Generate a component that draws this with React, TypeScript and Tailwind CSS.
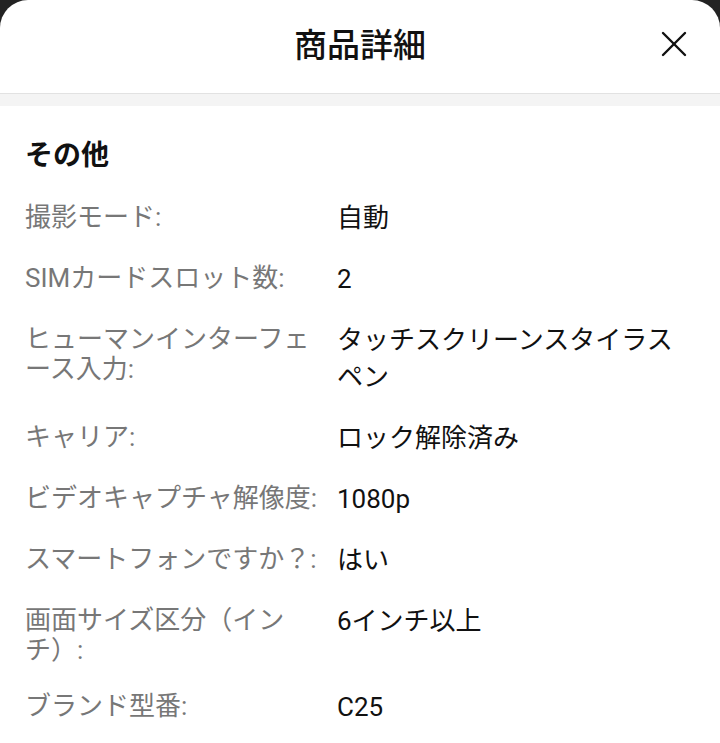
const specs = [
  { label: '撮影モード:', value: '自動' },
  { label: 'SIMカードスロット数:', value: '2' },
  { label: 'ヒューマンインターフェース入力:', value: 'タッチスクリーンスタイラスペン' },
  { label: 'キャリア:', value: 'ロック解除済み' },
  { label: 'ビデオキャプチャ解像度:', value: '1080p' },
  { label: 'スマートフォンですか？:', value: 'はい' },
  { label: '画面サイズ区分（インチ）:', value: '6インチ以上' },
  { label: 'ブランド型番:', value: 'C25' },
]

export default function App() {
  return (
    <div
      className="h-[743px] w-[720px] overflow-hidden bg-[#232323]"
      style={{ fontFamily: 'Roboto, "Noto Sans CJK JP", sans-serif' }}
    >
      <div className="h-full rounded-t-[28px] bg-white">
        <header className="relative flex h-[94px] items-center justify-center border-b border-[#e2e2e2] pb-[3px]">
          <h1 className="text-[33px] leading-none font-medium text-[#111]">商品詳細</h1>
          <button aria-label="閉じる" className="absolute right-[32px] top-[30px] text-[#111]">
            <svg width="28" height="28" viewBox="0 0 28 28" fill="none" stroke="currentColor" strokeWidth="2.4" strokeLinecap="round">
              <path d="M3 3 L25 25" />
              <path d="M25 3 L3 25" />
            </svg>
          </button>
        </header>
        <div className="h-[12px] bg-[#f4f4f4]" />

        <section className="pl-[25px] pr-[40px] pt-[32px]">
          <h2 className="text-[28px] leading-[36px] font-bold text-[#111]">その他</h2>
          <dl className="mt-[26px] grid grid-cols-[300px_1fr] gap-x-[12px] gap-y-[24px]">
            {specs.map(s => (
              <div key={s.label} className="contents">
                <dt className="pt-[2px] text-[26px] leading-[30px] text-[#777]">{s.label}</dt>
                <dd className="text-[26px] leading-[37px] text-[#111]">{s.value}</dd>
              </div>
            ))}
          </dl>
        </section>
      </div>
    </div>
  )
}
